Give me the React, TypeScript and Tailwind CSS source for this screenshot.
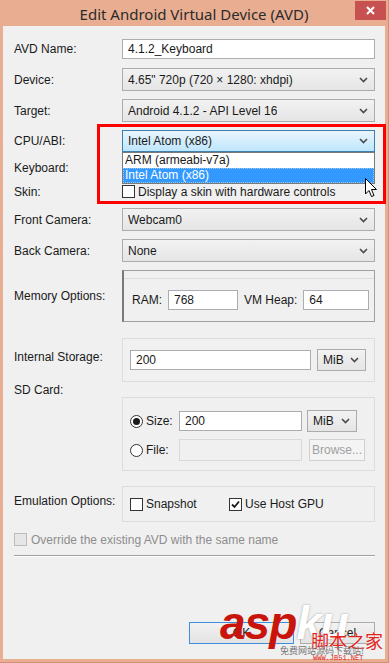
import type { ReactNode } from "react";

function Chevron() {
  return (
    <svg width="9" height="6" viewBox="0 0 9 6" className="shrink-0">
      <path d="M1 1 L4.5 4.5 L8 1" fill="none" stroke="#4a4a4a" strokeWidth="1.6" />
    </svg>
  );
}

function Select({ value, className = "", active = false }: { value: string; className?: string; active?: boolean }) {
  return (
    <div
      className={`flex h-full items-center justify-between border pl-[5px] pr-[6px] ${
        active
          ? "border-[#3c7fb1] bg-gradient-to-b from-[#eaf6fd] to-[#bee6fd]"
          : "border-[#acacac] bg-gradient-to-b from-[#f2f2f2] to-[#e5e5e5]"
      } ${className}`}
    >
      <span className="truncate">{value}</span>
      <Chevron />
    </div>
  );
}

function Input({ value = "", className = "", disabled = false }: { value?: string; className?: string; disabled?: boolean }) {
  return (
    <div
      className={`flex items-center border px-[5px] ${
        disabled ? "border-[#d9d9d9] bg-[#f0f0f0]" : "border-[#abadb3] bg-white"
      } ${className}`}
    >
      {value}
    </div>
  );
}

function Check({ checked = false, disabled = false }: { checked?: boolean; disabled?: boolean }) {
  return (
    <div
      className={`flex h-[13px] w-[13px] shrink-0 items-center justify-center border ${
        disabled ? "border-[#bcbcbc] bg-[#e6e6e6]" : "border-[#333333] bg-white"
      }`}
    >
      {checked && (
        <svg width="9" height="9" viewBox="0 0 9 9">
          <path d="M1 4.5 L3.5 7 L8 1.5" fill="none" stroke="#1a1a1a" strokeWidth="1.8" />
        </svg>
      )}
    </div>
  );
}

function Radio({ checked = false }: { checked?: boolean }) {
  return (
    <div className="flex h-[13px] w-[13px] shrink-0 items-center justify-center rounded-full border border-[#333333] bg-white">
      {checked && <div className="h-[7px] w-[7px] rounded-full bg-[#1a1a1a]" />}
    </div>
  );
}

function Row({ label, className, labelClass = "self-center", children }: { label: string; className: string; labelClass?: string; children: ReactNode }) {
  return (
    <div className={`flex ${className}`}>
      <div className={`w-[108px] shrink-0 whitespace-nowrap leading-[16px] ${labelClass}`}>{label}</div>
      <div className="relative w-[253px]">{children}</div>
    </div>
  );
}

export default function App() {
  return (
    <div className="flex h-[663px] w-[389px] flex-col overflow-hidden border-b border-r border-[#cf8f72] bg-[#e9ae92] font-['Liberation_Sans',sans-serif] text-[12px] text-[#1a1a1a]">
      {/* title bar */}
      <div className="relative flex h-[26px] shrink-0 items-center justify-center">
        <span className="pt-[2px] font-['Noto_Sans',sans-serif] text-[15px] text-[#2b2b2b]">Edit Android Virtual Device (AVD)</span>
        <div className="absolute right-[2px] top-[1px] flex h-[19px] w-[31px] items-center justify-center bg-[#c75050]">
          <svg width="9" height="9" viewBox="0 0 9 9">
            <path d="M1 1 L8 8 M8 1 L1 8" stroke="white" strokeWidth="2" />
          </svg>
        </div>
      </div>

      {/* content */}
      <div className="relative mx-[3px] mb-[3px] flex flex-1 flex-col bg-[#f0f0f0] pl-[11px]">
        <Row label="AVD Name:" className="mt-[13px] h-[20px]">
          <Input value="4.1.2_Keyboard" className="h-full" />
        </Row>
        <Row label="Device:" className="mt-[9px] h-[23px]">
          <Select value={"4.65\" 720p (720 × 1280: xhdpi)"} />
        </Row>
        <Row label="Target:" className="mt-[8px] h-[23px]">
          <Select value="Android 4.1.2 - API Level 16" />
        </Row>
        <Row label="CPU/ABI:" className="mt-[8px] h-[22px]">
          <Select value="Intel Atom (x86)" active />
          <div className="absolute left-0 top-full z-10 w-full border border-[#7a7a7a] bg-white">
            <div className="h-[15px] pl-[2px] leading-[15px]">ARM (armeabi-v7a)</div>
            <div className="h-[15px] border border-dotted border-[#9cc9f5] bg-[#3399ff] pl-[1px] leading-[13px] text-white">
              Intel Atom (x86)
            </div>
          </div>
        </Row>
        <Row label="Keyboard:" className="mt-[8px] h-[16px]">
          <div className="flex h-full items-center gap-[3px]">
            <Check checked />
            <span>Hardware keyboard present</span>
          </div>
        </Row>
        <Row label="Skin:" className="mt-[8px] h-[15px]">
          <div className="flex h-full items-center gap-[3px]">
            <Check />
            <span>Display a skin with hardware controls</span>
          </div>
        </Row>
        <Row label="Front Camera:" className="mt-[9px] h-[23px]">
          <Select value="Webcam0" />
        </Row>
        <Row label="Back Camera:" className="mt-[8px] h-[23px]">
          <Select value="None" />
        </Row>
        <Row label="Memory Options:" className="mt-[8px] h-[52px]">
          <div className="flex h-full flex-col border border-l-2 border-[#a0a0a0] border-l-[#7a7a7a]">
            <div className="h-[8px] border-b border-[#dcdcdc]" />
            <div className="flex flex-1 items-center pl-[8px]">
              <span className="mr-[6px]">RAM:</span>
              <Input value="768" className="h-[20px] w-[70px]" />
              <span className="ml-[6px] mr-[6px]">VM Heap:</span>
              <Input value="64" className="h-[20px] w-[66px]" />
            </div>
          </div>
        </Row>
        <Row label="Internal Storage:" labelClass="self-start mt-[11px]" className="mt-[16px] h-[44px]">
          <div className="flex h-full items-center border border-[#dcdcdc] pl-[7px]">
            <Input value="200" className="h-[20px] w-[181px]" />
            <Select value="MiB" className="ml-[6px] !h-[22px] w-[49px]" />
          </div>
        </Row>
        <Row label="SD Card:" labelClass="self-start mt-[0px]" className="mt-[0px] h-[89px]">
          <div className="mt-[15px] flex h-[74px] flex-col border border-[#dcdcdc] pl-[7px] pt-[12px]">
            <div className="flex h-[22px] items-center">
              <Radio checked />
              <span className="ml-[3px] w-[33px]">Size:</span>
              <Input value="200" className="h-[20px] w-[123px]" />
              <Select value="MiB" className="ml-[5px] !h-[22px] w-[50px]" />
            </div>
            <div className="mt-[7px] flex h-[22px] items-center">
              <Radio />
              <span className="ml-[3px] w-[33px]">File:</span>
              <Input disabled className="h-[22px] w-[123px]" />
              <div className="ml-[7px] flex h-[22px] w-[56px] items-center justify-center border border-[#d0d0d0] bg-[#f4f4f4] text-[#a0a0a0]">
                Browse...
              </div>
            </div>
          </div>
        </Row>
        <Row label="Emulation Options:" labelClass="self-start mt-[7px]" className="mt-[15px] h-[36px]">
          <div className="flex h-full items-center border border-[#dcdcdc] pl-[7px]">
            <Check />
            <span className="ml-[3px] w-[83px]">Snapshot</span>
            <Check checked />
            <span className="ml-[3px]">Use Host GPU</span>
          </div>
        </Row>
        <div className="mt-[11px] flex h-[13px] items-center gap-[4px]">
          <Check disabled />
          <span className="text-[#8d8d8d]">Override the existing AVD with the same name</span>
        </div>
        <div className="mt-[9px] h-[2px] w-[361px] border-t border-[#a0a0a0] bg-white" />

        <div className="mt-[65px] flex h-[22px] w-[361px] justify-end gap-[6px]">
          <div className="flex w-[105px] items-center justify-center border border-[#3c8fde] bg-gradient-to-b from-[#f2f2f2] to-[#e3e3e3]">
            OK
          </div>
          <div className="flex w-[75px] items-center justify-center border border-[#acacac] bg-gradient-to-b from-[#f2f2f2] to-[#e3e3e3]">
            Cancel
          </div>
        </div>

        {/* red highlight annotation */}
        <div className="pointer-events-none absolute left-[94px] top-[98px] z-20 h-[80px] w-[289px] border-[3px] border-[#ff0000]" />

        {/* mouse cursor */}
        <svg className="absolute left-[362px] top-[152px] z-30" width="13" height="20" viewBox="0 0 13 20">
          <path d="M0.5 0.5 L0.5 16 L4 12.5 L6.5 18.5 L9 17.5 L6.5 11.5 L11.5 11.5 Z" fill="white" stroke="black" strokeWidth="1" />
        </svg>

        {/* watermark */}
        <div className="pointer-events-none absolute left-[217px] top-[574px] z-30">
          <div className="flex items-end font-['Liberation_Sans',sans-serif] text-[46px] font-bold italic leading-[46px] tracking-[-1px]">
            <span className="text-[#c8140a]">asp</span>
            <span className="text-white [text-shadow:0_0_2px_#999]">ku</span>
          </div>
        </div>
        <div className="pointer-events-none absolute left-[308px] top-[604px] z-30 font-['Noto_Sans_CJK_SC',sans-serif] text-[18px] leading-[20px] text-[#e2231a] [text-shadow:0_0_1px_white]">
          脚本之家
        </div>
        <div className="pointer-events-none absolute left-[277px] top-[620px] z-30 font-['Noto_Sans_CJK_SC',sans-serif] text-[9px] leading-[10px] text-[#777777]">
          免费网站源码下载站!
        </div>
        <div className="pointer-events-none absolute left-[310px] top-[629px] z-30 font-['Liberation_Mono',monospace] text-[7px] leading-[7px] text-[#e2231a]">
          WWW.JB51.NET
        </div>
      </div>
    </div>
  );
}
